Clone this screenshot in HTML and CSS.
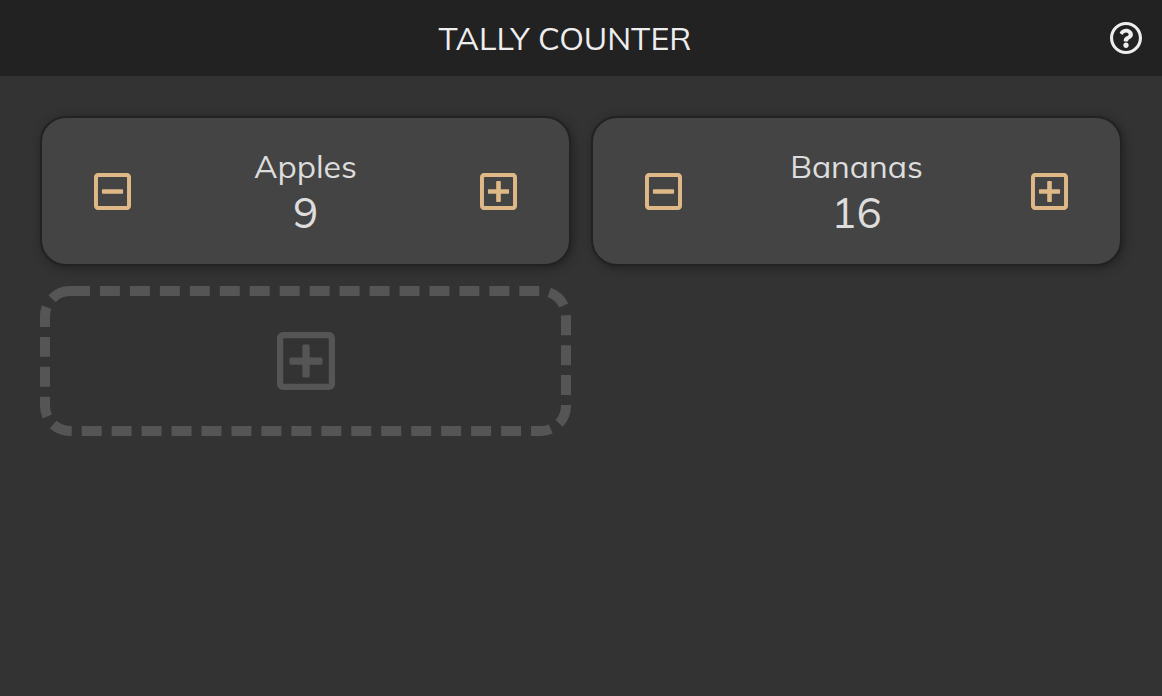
FILE: index.html
```html
<!DOCTYPE html>
<html lang="en">
<head>
  <meta charset="utf-8">
  <meta name="viewport" content="width=device-width, initial-scale=1">
  <title>Tally Counter</title>
  <link rel="stylesheet" href="styles.css">
</head>
<body>
  <svg class="sprite" aria-hidden="true">
    <symbol id="plus" viewBox="0 32 448 448">
      <path d="M352 240v32c0 6.600-5.400 12-12 12h-88v88c0 6.600-5.400 12-12 12h-32c-6.600 0-12-5.400-12-12v-88h-88c-6.600 0-12-5.400-12-12v-32c0-6.600 5.400-12 12-12h88v-88c0-6.600 5.400-12 12-12h32c6.600 0 12 5.400 12 12v88h88c6.600 0 12 5.400 12 12zm96-160v352c0 26.500-21.500 48-48 48H48c-26.500 0-48-21.500-48-48V80c0-26.500 21.500-48 48-48h352c26.500 0 48 21.500 48 48zm-48 346V86c0-3.300-2.700-6-6-6H54c-3.300 0-6 2.700-6 6v340c0 3.300 2.700 6 6 6h340c3.300 0 6-2.700 6-6z"/>
    </symbol>
    <symbol id="minus" viewBox="0 32 448 448">
      <path d="M108 284c-6.600 0-12-5.400-12-12v-32c0-6.600 5.400-12 12-12h232c6.600 0 12 5.400 12 12v32c0 6.600-5.400 12-12 12H108zM448 80v352c0 26.500-21.500 48-48 48H48c-26.500 0-48-21.500-48-48V80c0-26.500 21.500-48 48-48h352c26.500 0 48 21.500 48 48zm-48 346V86c0-3.300-2.700-6-6-6H54c-3.300 0-6 2.700-6 6v340c0 3.300 2.700 6 6 6h340c3.300 0 6-2.700 6-6z"/>
    </symbol>
  </svg>

  <header class="header">
    <h1 class="title">TALLY COUNTER</h1>
    <button class="icon-button" type="button" aria-label="Help">
      <svg class="icon-help" viewBox="8 8 496 496" aria-hidden="true">
        <path d="M256 8C119.043 8 8 119.083 8 256c0 136.997 111.043 248 248 248s248-111.003 248-248C504 119.083 392.957 8 256 8zm0 448c-110.532 0-200-89.431-200-200 0-110.495 89.472-200 200-200 110.491 0 200 89.471 200 200 0 110.530-89.431 200-200 200zm107.244-255.200c0 67.052-72.421 68.084-72.421 92.863V300c0 6.627-5.373 12-12 12h-45.647c-6.627 0-12-5.373-12-12v-8.659c0-35.745 27.100-50.034 47.579-61.516 17.561-9.845 28.324-16.541 28.324-29.579 0-17.246-21.999-28.693-39.784-28.693-23.189 0-33.894 10.977-48.942 29.969-4.057 5.120-11.460 6.071-16.666 2.124l-27.824-21.098c-5.107-3.872-6.251-11.066-2.644-16.363C184.846 131.491 214.940 112 261.794 112c49.071 0 101.450 38.304 101.450 88.800zM298 368c0 23.159-18.841 42-42 42s-42-18.841-42-42 18.841-42 42-42 42 18.841 42 42z"/>
      </svg>
    </button>
  </header>

  <main class="counters">
    <section class="card">
      <button class="icon-button" type="button" aria-label="Decrease Apples"><svg class="icon-step" aria-hidden="true"><use href="#minus"/></svg></button>
      <div class="tally">
        <h2 class="name">Apples</h2>
        <p class="count">9</p>
      </div>
      <button class="icon-button" type="button" aria-label="Increase Apples"><svg class="icon-step" aria-hidden="true"><use href="#plus"/></svg></button>
    </section>
    <section class="card">
      <button class="icon-button" type="button" aria-label="Decrease Bananas"><svg class="icon-step" aria-hidden="true"><use href="#minus"/></svg></button>
      <div class="tally">
        <h2 class="name">Bananas</h2>
        <p class="count">16</p>
      </div>
      <button class="icon-button" type="button" aria-label="Increase Bananas"><svg class="icon-step" aria-hidden="true"><use href="#plus"/></svg></button>
    </section>
    <button class="add-card" type="button" aria-label="Add counter">
      <svg class="dashes" aria-hidden="true"><rect class="dash-line" rx="25" pathLength="1280"/></svg>
      <svg class="icon-add" aria-hidden="true"><use href="#plus"/></svg>
    </button>
  </main>
</body>
</html>
```
FILE: styles.css
```css
* {
  box-sizing: border-box;
}

body {
  margin: 0;
  min-height: 100vh;
  background: #333;
  color: #ddd;
  font-family: Muli, Mulish, Nunito, Lato, sans-serif;
}

h1,
h2,
p {
  margin: 0;
  font-weight: 400;
}

svg {
  display: block;
  fill: currentColor;
}

.sprite {
  display: none;
}

.header {
  display: flex;
  align-items: center;
  padding: 16px 20px;
  background: #222;
  color: #eee;
}

.title {
  flex: 1;
  font-size: 32px;
  line-height: 44px;
  text-align: center;
}

.icon-button {
  padding: 0;
  border: 0;
  background: none;
  color: inherit;
  cursor: pointer;
}

.icon-help {
  width: 32px;
  height: 32px;
}

.counters {
  display: grid;
  grid-template-columns: repeat(auto-fit, minmax(400px, 1fr));
  gap: 20px;
  padding: 40px;
}

.card {
  display: flex;
  align-items: center;
  min-height: 150px;
  padding: 24px 52px;
  border: 2px solid #222;
  border-radius: 26px;
  background: #444;
  box-shadow: 2px 2px 10px #222;
}

.card .icon-button {
  color: burlywood;
}

.icon-step {
  width: 37px;
  height: 37px;
}

.tally {
  flex: 1;
  text-align: center;
}

.name {
  font-size: 32px;
  line-height: 44px;
}

.count {
  font-size: 42px;
  line-height: 50px;
}

.add-card {
  position: relative;
  display: grid;
  place-items: center;
  min-height: 150px;
  padding: 0;
  border: 0;
  border-radius: 30px;
  background: none;
  color: #555;
  cursor: pointer;
}

.dashes {
  position: absolute;
  inset: 0;
  width: 100%;
  height: 100%;
}

.dash-line {
  x: 5px;
  y: 5px;
  width: calc(100% - 10px);
  height: calc(100% - 10px);
  fill: none;
  stroke: currentColor;
  stroke-width: 10px;
  stroke-dasharray: 20 10;
}

.icon-add {
  width: 58px;
  height: 58px;
}
```
